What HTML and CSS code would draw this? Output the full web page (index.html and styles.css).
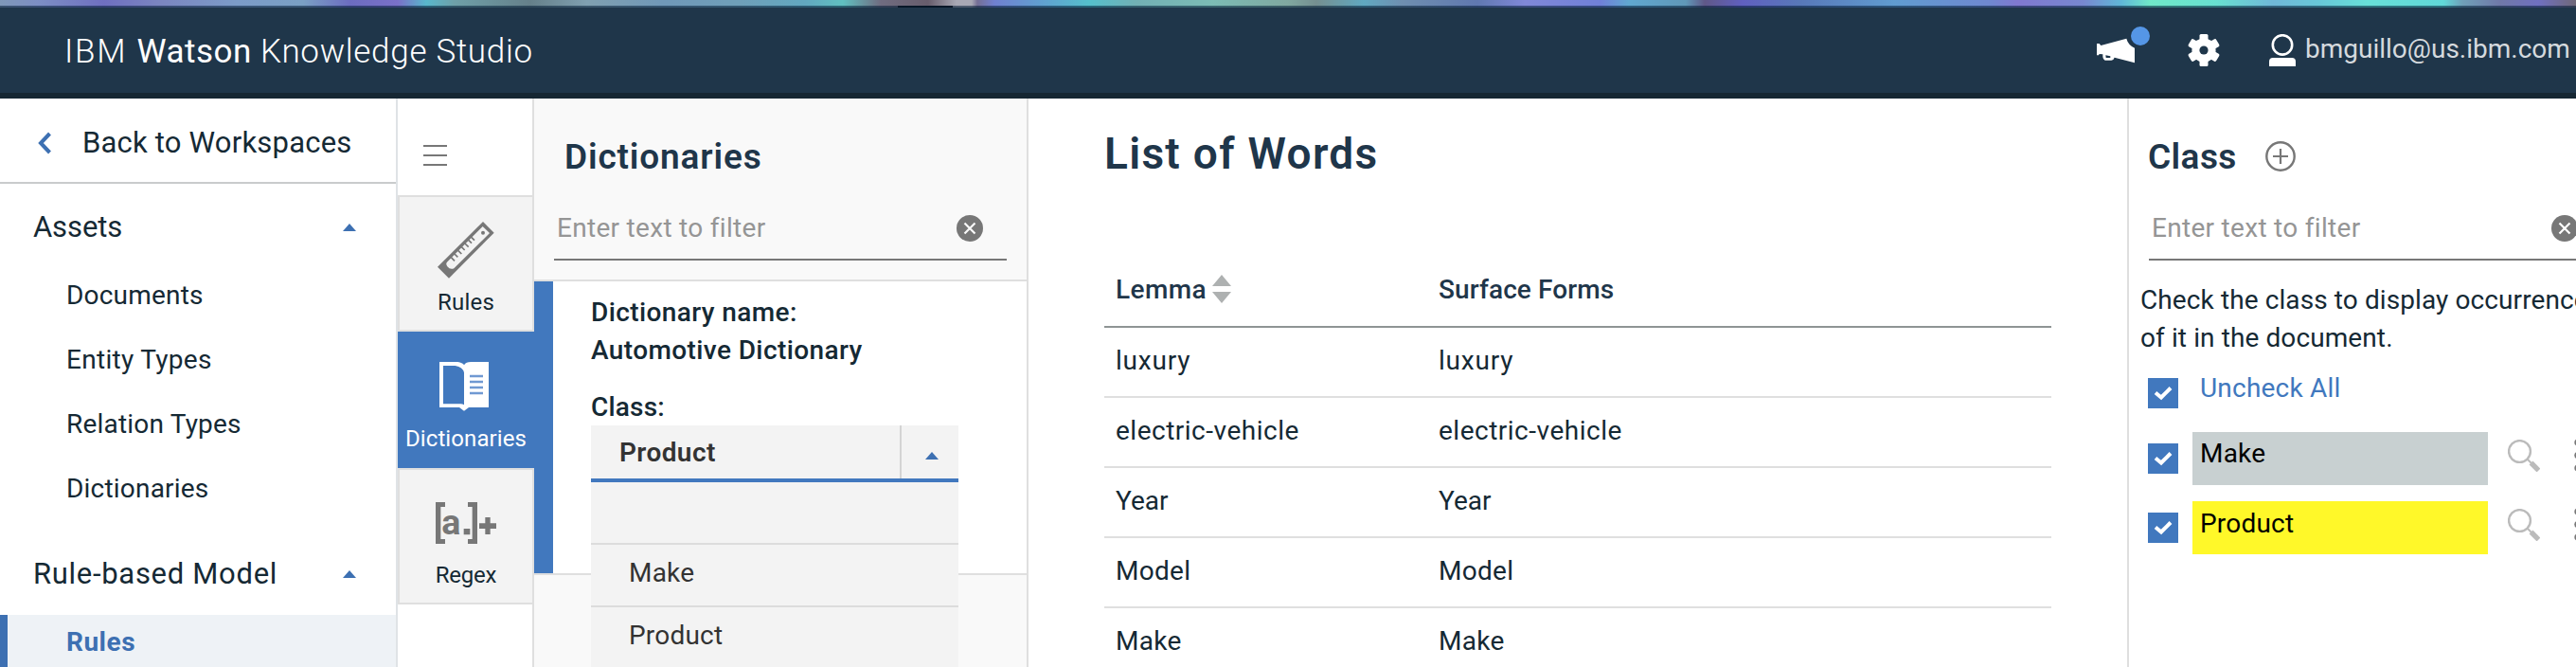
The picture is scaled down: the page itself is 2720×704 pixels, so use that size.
FILE: index.html
```html
<!DOCTYPE html>
<html lang="en">
<head>
<meta charset="utf-8">
<title>IBM Watson Knowledge Studio</title>
<link rel="stylesheet" href="styles.css">
</head>
<body>
<div class="desktop-strip"></div>
<header class="topbar">
  <div class="brand"><span class="brand-ibm">IBM </span><b>Watson</b><span class="brand-product"> Knowledge Studio</span></div>
  <div class="tools">
    <svg class="i-news" viewBox="30 0 186 198"><path fill="#fff" d="M42 78H50L55 84L136 62Q141 82 162 92V139L98 122Q96 130 88 131H68Q60 128 61 112L50 111L48 115H42Z"/><path fill="#1f364a" d="M70 115L85 118V123H71Z"/><circle cx="180" cy="54" r="30" fill="#5596e6"/></svg>
    <svg class="i-gear" viewBox="-17 -17 34 34"><g fill="#fff"><circle r="12.6"/><rect x="-4.5" y="-17" width="9" height="34" rx="1.5"/><rect x="-4.5" y="-17" width="9" height="34" rx="1.5" transform="rotate(60)"/><rect x="-4.5" y="-17" width="9" height="34" rx="1.5" transform="rotate(120)"/></g><circle r="4.6" fill="#1f364a"/></svg>
    <svg class="i-user" viewBox="0 0 28 34"><circle cx="14" cy="11.4" r="10.2" fill="none" stroke="#fff" stroke-width="2.6"/><path fill="#fff" d="M0 34V29Q0 25 4 25H24Q28 25 28 29V34Z"/></svg>
    <span class="email">bmguillo@us.ibm.com</span>
  </div>
</header>
<div class="workspace">
  <nav class="sidebar">
    <a class="back"><svg class="i-back" viewBox="0 0 16 24"><path d="M13.5 2L4 12L13.5 22" fill="none" stroke="#3d70b2" stroke-width="4"/></svg>Back to Workspaces</a>
    <div class="group assets"><span>Assets</span><i class="caret"></i></div>
    <a class="item">Documents</a>
    <a class="item entity">Entity Types</a>
    <a class="item">Relation Types</a>
    <a class="item">Dictionaries</a>
    <div class="group model"><span>Rule-based Model</span><i class="caret"></i></div>
    <a class="item current">Rules</a>
  </nav>
  <div class="rail">
    <div class="burger"><i></i><i></i><i></i></div>
    <div class="tab"><svg viewBox="120 69 192 186"><path fill="#777" d="M270 72L305 107L162 251L126 215Z"/><path fill="#f3f3f3" d="M269 87L291 108L178 220Q166 225 157 214Q150 204 158 198Z"/><circle cx="270" cy="107" r="6" fill="#777"/><g stroke="#777" stroke-width="5"><path d="M169 185L180 196M180 174L190 184M191 163L202 174M202 152L212 162M213 141L224 152M224 130L234 140M233 121L243 131"/></g></svg><span>Rules</span></div>
    <div class="tab active"><svg viewBox="120 501 192 186"><path fill="#fff" d="M132 516H190Q205 518 210 526Q216 516 232 516H288V660H225L210 671L195 660H132Z"/><path fill="#4178be" d="M144 528H182Q206 532 210 550V652Q204 648 196 649H144Z"/><path stroke="#7099d2" stroke-width="7" d="M228 561H270M228 579H270M228 597H270M228 615H270"/></svg><span>Dictionaries</span></div>
    <div class="tab regex"><svg viewBox="120 933 192 186"><path fill="#777" d="M120 960H150V975H136V1077H150V1092H120ZM252 960H222V975H236V1077H222V1092H252ZM209 1044H229V1063H209ZM277 1008H293V1027H312V1044H293V1062H277V1044H258V1027H277Z"/><text x="139" y="1063" class="regex-a">a</text></svg><span>Regex</span></div>
  </div>
  <section class="dictionaries">
    <div class="dict-head">
      <h2>Dictionaries</h2>
      <div class="filter"><span>Enter text to filter</span><svg viewBox="0 0 28 28"><circle cx="14" cy="14" r="14" fill="#777"/><path d="M8.5 8.5L19.5 19.5M19.5 8.5L8.5 19.5" stroke="#f9f9f9" stroke-width="2.2"/></svg></div>
    </div>
    <div class="card">
      <div class="label">Dictionary name:</div>
      <div class="label">Automotive Dictionary</div>
      <div class="label class-label">Class:</div>
      <div class="select">
        <span class="value">Product</span><span class="toggle"><i class="caret"></i></span>
        <div class="menu"><div></div><div>Make</div><div>Product</div></div>
      </div>
    </div>
  </section>
  <main class="words">
    <h1>List of Words</h1>
    <div class="row thead"><span>Lemma<svg viewBox="0 0 20 30"><path fill="#aeb1b1" d="M10 0L20 12H0ZM0 18H20L10 30Z"/></svg></span><span class="surface">Surface Forms</span></div>
    <div class="row lux"><span>luxury</span><span>luxury</span></div>
    <div class="row"><span>electric-vehicle</span><span>electric-vehicle</span></div>
    <div class="row year"><span>Year</span><span>Year</span></div>
    <div class="row short"><span>Model</span><span>Model</span></div>
    <div class="row short"><span>Make</span><span>Make</span></div>
  </main>
  <aside class="classes">
    <div class="class-head"><h2>Class</h2><svg viewBox="0 0 32 32"><circle cx="16" cy="16" r="14.7" fill="none" stroke="#777" stroke-width="2.4"/><path d="M16 8V24M8 16H24" stroke="#777" stroke-width="2.2"/></svg></div>
    <div class="filter"><span>Enter text to filter</span><svg viewBox="0 0 28 28"><circle cx="14" cy="14" r="14" fill="#777"/><path d="M8.5 8.5L19.5 19.5M19.5 8.5L8.5 19.5" stroke="#fff" stroke-width="2.2"/></svg></div>
    <p>Check the class to display occurrences<br>of it in the document.</p>
    <div class="crow all"><svg class="check" viewBox="0 0 32 32"><path d="M8 15.5L14 20.5L24 10.5" fill="none" stroke="#fff" stroke-width="4"/></svg><span class="uncheck">Uncheck All</span></div>
    <div class="crow"><svg class="check" viewBox="0 0 32 32"><path d="M8 15.5L14 20.5L24 10.5" fill="none" stroke="#fff" stroke-width="4"/></svg><span class="swatch make">Make</span><svg class="find" viewBox="0 0 34 34"><g fill="none" stroke="#bbb"><circle cx="12.5" cy="12.5" r="11.4" stroke-width="2.4"/><path d="M20.5 20.5L25 25" stroke-width="2"/><path d="M24.5 24.5L32.5 32.5" stroke-width="5.4"/></g></svg><svg class="dots" viewBox="0 0 8 36"><g fill="#777"><circle cx="4" cy="4" r="3.7"/><circle cx="4" cy="17.5" r="3.7"/><circle cx="4" cy="31" r="3.7"/></g></svg></div>
    <div class="crow last"><svg class="check" viewBox="0 0 32 32"><path d="M8 15.5L14 20.5L24 10.5" fill="none" stroke="#fff" stroke-width="4"/></svg><span class="swatch product">Product</span><svg class="find" viewBox="0 0 34 34"><g fill="none" stroke="#bbb"><circle cx="12.5" cy="12.5" r="11.4" stroke-width="2.4"/><path d="M20.5 20.5L25 25" stroke-width="2"/><path d="M24.5 24.5L32.5 32.5" stroke-width="5.4"/></g></svg><svg class="dots" viewBox="0 0 8 36"><g fill="#777"><circle cx="4" cy="4" r="3.7"/><circle cx="4" cy="17.5" r="3.7"/><circle cx="4" cy="31" r="3.7"/></g></svg></div>
  </aside>
</div>
</body>
</html>
```
FILE: styles.css
```css
* { box-sizing: border-box; }
body { margin: 0; width: 2720px; height: 704px; overflow: hidden; background: #fff; color: #152934; font: 400 28px/40px Roboto, "Noto Sans", sans-serif; letter-spacing: .2px; }
svg { display: block; flex: none; }
h1, h2, p { margin: 0; }

.desktop-strip { height: 8px; background:
  linear-gradient(rgba(0,25,50,.55), rgba(0,25,50,.55)) 0 6px / 100% 2px no-repeat,
  linear-gradient(#12161c, #12161c) 948px 6px / 58px 2px no-repeat,
  linear-gradient(90deg, #7f98b8 0, #7d8fc4 40px, #6f6fc0 110px, #7b86c0 170px, #7c9cc8 250px, #7aa0c4 320px, #6c6cc0 370px, #7a70c8 420px, #58b8cc 450px, #6fa0a8 480px, #65808a 560px, #80a0b0 620px, #7098b8 700px, #6f9fb8 780px, #62a8c0 850px, #60c0c0 890px, #706c80 930px, #675d6c 980px, #a8a8b4 1010px, #a8a8b4 1026px, #756f95 1032px, #7080d0 1050px, #60a0d0 1100px, #55c0cc 1150px, #72b0b4 1200px, #7cbcb4 1280px, #80a8a0 1360px, #758f90 1390px, #60a8c0 1440px, #6f8fb0 1480px, #6078b0 1560px, #8088d8 1610px, #7080d8 1690px, #60a8d0 1720px, #6098b8 1780px, #605888 1800px, #6060c0 1840px, #5878b8 1900px, #609cd0 2000px, #6f88d0 2100px, #8078d0 2130px, #7888d0 2200px, #60b8d8 2240px, #70e8c8 2270px, #68e0d0 2340px, #70b8d8 2400px, #68c8d8 2450px, #68e0d8 2500px, #60d8d8 2580px, #70a0b8 2600px, #7078a8 2640px, #7070c0 2680px, #706878 2720px); }

.topbar { height: 96px; background: #1f364a; border-bottom: 6px solid #162733; display: flex; align-items: center; justify-content: space-between; color: #fff; }
.brand { padding: 4px 0 0 68px; font-size: 35px; font-weight: 300; white-space: pre; }
.brand-ibm { letter-spacing: 1.7px; }
.brand b { letter-spacing: .5px; }
.brand-product { letter-spacing: .7px; }
.tools { width: 510px; display: flex; align-items: center; }
.i-news { width: 62px; height: 66px; }
.i-gear { width: 34px; height: 34px; margin-left: 38px; }
.i-user { width: 28px; height: 34px; margin-left: 52px; }
.email { margin: 0 0 3px 10px; color: #d5dade; letter-spacing: 0; }

.workspace { display: flex; height: 600px; }
.sidebar { width: 420px; border-right: 2px solid #dfe3e6; }
.back { display: flex; align-items: center; height: 90px; padding: 5px 0 0 39px; border-bottom: 2px solid #c9cbcc; font-size: 31px; }
.i-back { width: 16px; height: 24px; margin-right: 32px; }
.group { display: flex; align-items: center; justify-content: space-between; padding: 8px 42px 0 35px; height: 84px; font-size: 31px; letter-spacing: -.1px; }
.group.model { height: 99px; padding: 12px 42px 0 35px; letter-spacing: .7px; }
.caret { width: 0; height: 0; border: 7px solid transparent; border-top: 0; border-bottom: 8px solid #3d70b2; }
.item { display: block; height: 68px; padding-left: 70px; line-height: 68px; }
.item.entity { letter-spacing: .3px; }
.item.current { height: 56px; line-height: 58px; padding-left: 62px; border-left: 8px solid #3d70b2; background: #eef2f6; color: #3d70b2; font-weight: 700; letter-spacing: .5px; }

.rail { width: 144px; border-right: 2px solid #dfdfdf; }
.burger { height: 102px; padding: 49px 0 0 27px; display: flex; flex-direction: column; gap: 8px; }
.burger i { width: 25px; height: 2px; background: #777; }
.tab { width: 144px; height: 144px; border: 2px solid #dfdfdf; background: #f3f3f3; padding-top: 25px; display: flex; flex-direction: column; align-items: center; gap: 8px; font-size: 24px; line-height: 32px; }
.tab svg { width: 64px; height: 62px; }
.tab.active { background: #4178be; border-color: #4178be; color: #fff; letter-spacing: .1px; }
.tab.regex { letter-spacing: -.2px; }
.regex-a { font: 700 113px Roboto, sans-serif; fill: #777; letter-spacing: 0; }

.dictionaries { width: 522px; border-right: 2px solid #dfdfdf; background: #f9f9f9; }
h2 { font-size: 37px; line-height: 48px; font-weight: 600; color: #1f364a; }
.dict-head { height: 193px; padding: 38px 21px 0; border-bottom: 2px solid #dfdfdf; }
.dict-head h2 { padding-left: 11px; letter-spacing: .85px; }
.filter { width: 478px; height: 67px; margin-top: 18px; padding: 0 25px 0 3px; border-bottom: 2px solid #777; display: flex; align-items: center; justify-content: space-between; color: #959595; letter-spacing: .3px; }
.filter svg { width: 28px; height: 28px; }
.card { height: 310px; border-bottom: 2px solid #dfdfdf; background: linear-gradient(90deg, #4178be 20px, #fff 20px); padding: 13px 0 0 60px; }
.label { font-weight: 500; letter-spacing: .4px; }
.class-label { margin-top: 20px; margin-bottom: -1px; letter-spacing: .2px; }
.select { position: relative; width: 388px; height: 60px; display: flex; justify-content: space-between; background: #f3f3f3; border-bottom: 4px solid #4178be; color: #333; }
.value { padding-left: 30px; line-height: 58px; font-weight: 600; letter-spacing: .4px; }
.toggle { width: 62px; border-left: 2px solid #d4d4d4; display: flex; align-items: center; justify-content: center; padding: 8px 0 0 4px; }
.menu { position: absolute; top: 60px; left: 0; width: 388px; background: #f3f3f3; }
.menu div { height: 66px; padding-left: 40px; line-height: 60px; border-bottom: 2px solid #dcdcdc; }

.words { width: 1160px; padding: 30px 80px 0; }
h1 { font-size: 46px; line-height: 56px; font-weight: 600; letter-spacing: 1.3px; color: #1f364a; }
.row { display: grid; grid-template-columns: 341px 1fr; width: 1000px; height: 74px; padding-left: 12px; border-bottom: 2px solid #dfdfdf; letter-spacing: .5px; }
.row span { display: flex; align-items: center; height: 70px; }
.thead { margin-top: 76px; height: 80px; border-color: #8e9494; font-weight: 500; color: #1f364a; letter-spacing: .4px; }
.thead span { height: 80px; }
.thead svg { width: 20px; height: 30px; margin: -2px 0 0 6px; }
.thead .surface { letter-spacing: .1px; }
.lux { letter-spacing: .8px; }
.year { letter-spacing: 0; }
.short { letter-spacing: .3px; }

.classes { width: 474px; border-left: 2px solid #dfdfdf; padding-top: 37px; overflow: hidden; }
.class-head { display: flex; align-items: center; margin-left: 20px; height: 49px; padding-top: 1px; }
.class-head h2 { width: 124px; letter-spacing: .4px; }
.class-head svg { width: 32px; height: 32px; margin-top: -3px; }
.classes .filter { margin-left: 21px; }
.classes p { margin: 22px 0 0 12px; white-space: nowrap; letter-spacing: .1px; }
.crow { display: flex; align-items: flex-start; margin: 17px 0 0 20px; height: 56px; }
.crow.all { margin-top: 13px; height: 49px; }
.check { width: 32px; height: 32px; margin-top: 12px; background: #4178be; }
.all .check { margin-top: 9px; }
.uncheck { margin-left: 23px; color: #4178be; letter-spacing: .2px; }
.swatch { flex: none; width: 312px; height: 56px; margin-left: 15px; padding: 3px 0 0 8px; color: #000; }
.swatch.make { background: #c8d0d1; }
.swatch.product { background: #fff829; padding-top: 4px; }
.find { width: 34px; height: 34px; margin: 8px 0 0 21px; }
.dots { flex: none; width: 8px; height: 36px; margin: 7px 0 0 36px; }
```
